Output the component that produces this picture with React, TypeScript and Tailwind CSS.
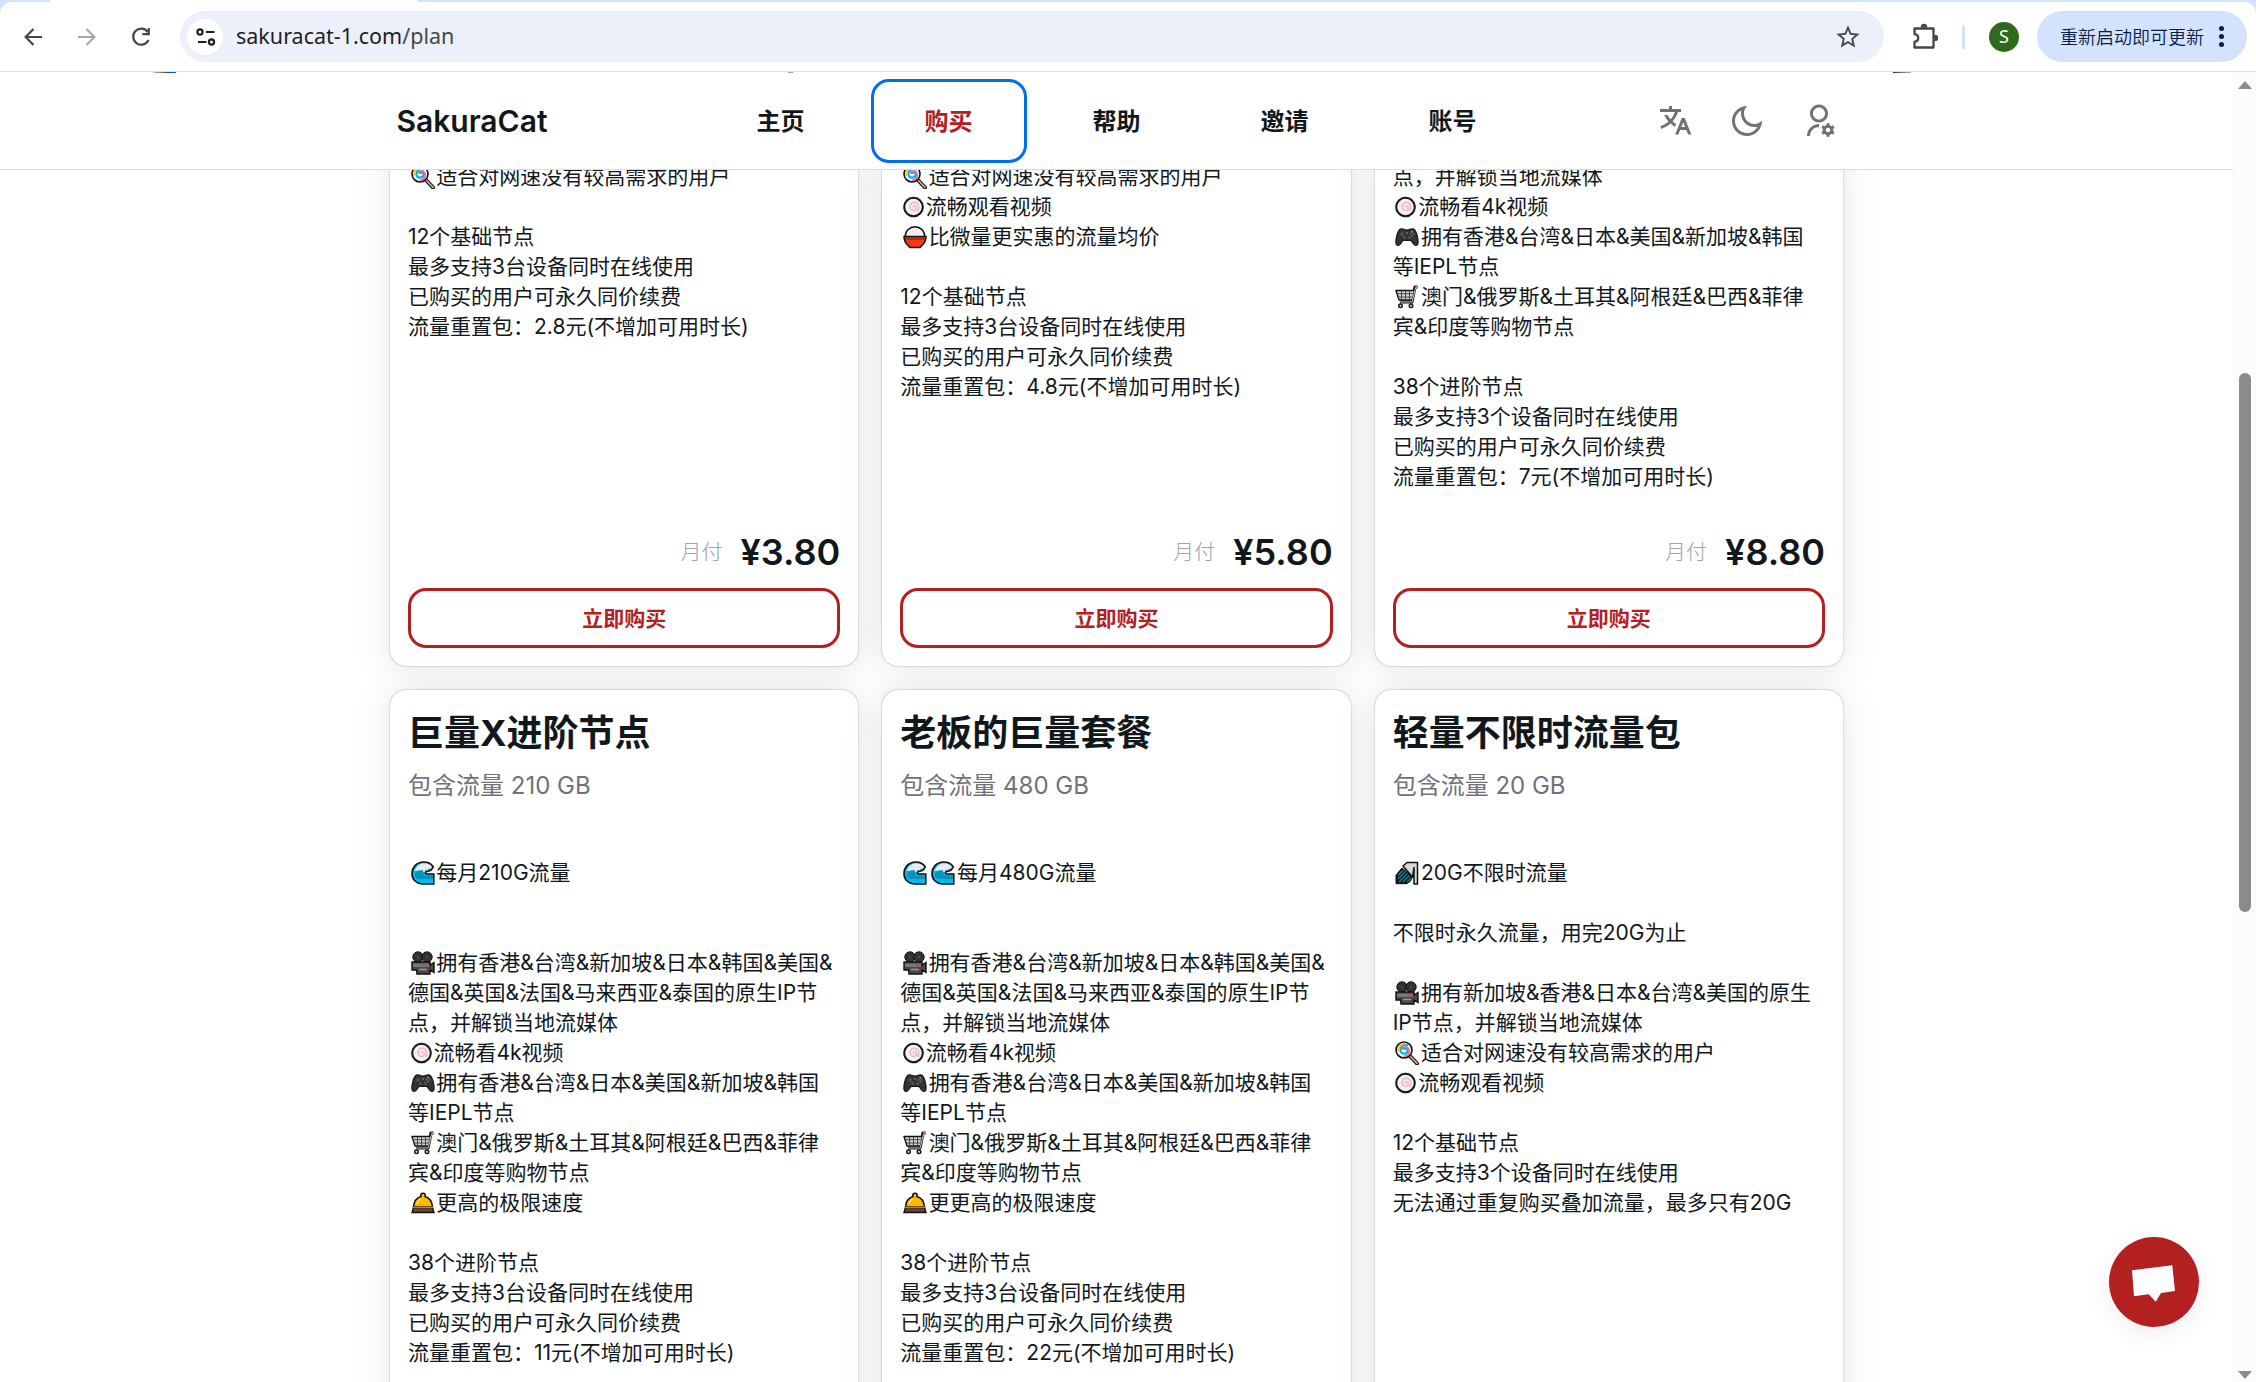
import type { ReactNode } from "react";
import { RiMoonLine, RiTranslate2, RiUserSettingsLine } from "react-icons/ri";

type EmojiName = "wave" | "camera" | "naruto" | "game" | "cart" | "bell" | "candy" | "rice" | "shower";

const drawings: Record<EmojiName, ReactNode> = {
  wave: (
    <>
      <path d="M22.8 13v10H11C5 22.500 1 18.500 1 12.500C1 6 6 1 12.500 1c4.500 0 8 1.800 9.800 5l-2.300 3.200-5 1.600c-1 1.300-.6 2.200.8 2.200z" fill="#00b7e8" stroke="#111" strokeWidth="1.600" />
      <path d="M3.500 10C5 5 9 2.200 13 2.200c3.500 0 6.500 1.400 8 4l-2 2-1-1.200-1.300 2.500-2-1-1 2.700C10 9 6 10 3.500 10z" fill="#ececec" />
      <path d="M4 14c0-2 1.500-4 4-4.500l4-.5-.5 2 2 3.500L22 15v3H8c-2-.5-4-2-4-4z" fill="#0a93b8" />
      <path d="M4 18c3 2 5-1 8 1s6-1 10 .5V22H10z" fill="#00bcf2" />
    </>
  ),
  camera: (
    <>
      <circle cx="7" cy="6" r="5.200" fill="#333" stroke="#111" />
      <circle cx="16" cy="6" r="5.200" fill="#333" stroke="#111" />
      <path d="M1 11h18v3l4-2.500v10L19 19v4H6l-.5-4H1z" fill="#494949" stroke="#111" strokeWidth="1.400" />
      <path d="M2 12.500h16v3.500H2z" fill="#777" />
      <path d="M14 12.500h2v3h-2z" fill="#e43b2a" />
      <path d="M8 18.500h8" stroke="#999" strokeWidth="1.500" />
      <circle cx="7" cy="6" r="1" fill="#555" />
      <circle cx="16" cy="6" r="1" fill="#555" />
    </>
  ),
  naruto: (
    <>
      <circle cx="10.500" cy="12" r="9.300" fill="#f1f1f1" stroke="#111" strokeWidth="2" />
      <circle cx="10.500" cy="12" r="9.900" fill="none" stroke="#555" strokeWidth="0.900" strokeDasharray="1.500 2" />
      <path d="M10.500 12.500c-1-1.500 2-2.500 2.700-.2.600 2.600-3 4.200-5 2.200-2.400-2.600-.6-7.500 3.400-7.200 4.200.5 5.500 5.700 2.800 8.700" fill="none" stroke="#f7b3bd" strokeWidth="1.400" />
    </>
  ),
  game: (
    <>
      <path d="M5.500 4C8 3 9 5 12 5s4-2 6.500-1C21.500 5.500 23.500 14 23 18.500c-.4 2.500-3 2.500-4.500.5L16 15.500H8L5.500 19C4 21 1.400 21 1 18.500.500 14 2.500 5.500 5.500 4z" fill="#333" stroke="#151515" strokeWidth="1.200" />
      <path d="M5 9h4M7 7v4" stroke="#555" strokeWidth="1.400" />
      <circle cx="9.500" cy="12.500" r="1.400" fill="#555" />
      <circle cx="14.500" cy="12.500" r="1.400" fill="#555" />
      <circle cx="17.200" cy="6.800" r=".9" fill="#d8b021" />
      <circle cx="19" cy="8.700" r=".9" fill="#c23b2a" />
      <circle cx="17.200" cy="10.500" r=".9" fill="#3a9b4b" />
      <circle cx="15.400" cy="8.700" r=".9" fill="#3a78c2" />
      <circle cx="12" cy="8" r=".8" fill="#999" />
    </>
  ),
  cart: (
    <>
      <path d="M22.500 2h-2.500L17 17H5" fill="none" stroke="#111" strokeWidth="3.200" strokeLinejoin="round" />
      <path d="M1 5.500h18.500L17.500 15H4z" fill="#d4d4d4" stroke="#111" strokeWidth="1.400" strokeLinejoin="round" />
      <path d="M2.500 8.700h16M3.500 12h14M6.500 6v8.500M10.500 6v8.500M14.500 6v8.500" stroke="#444" strokeWidth="1" />
      <path d="M20.500 3L17.200 17H4.500" fill="none" stroke="#ccc" strokeWidth="1" />
      <circle cx="5.500" cy="20.800" r="1.800" fill="#ddd" stroke="#111" strokeWidth="1.400" />
      <circle cx="16" cy="20.800" r="1.800" fill="#ddd" stroke="#111" strokeWidth="1.400" />
      <path d="M20.300 2h2.700" stroke="#f06a62" strokeWidth="2.400" />
    </>
  ),
  bell: (
    <>
      <path d="M12 2.200c2 0 2.800 1.500 2 3.300 4.300 1.200 7 5 7.500 10.500h-19C3 10.500 5.700 6.700 10 5.500c-.8-1.800 0-3.300 2-3.300z" fill="#ffb900" stroke="#111" strokeWidth="1.500" />
      <path d="M6 13c.5-2.500 1.800-4 3.500-5" fill="none" stroke="#ffe08a" strokeWidth="1.300" />
      <path d="M2.500 16.500h19L23 21.500H1z" fill="#6d4534" stroke="#111" strokeWidth="1.400" />
      <path d="M2 16.300h20" stroke="#e08a00" strokeWidth="1.300" />
    </>
  ),
  candy: (
    <>
      <path d="M14 14l8 8.500" stroke="#111" strokeWidth="4" strokeLinecap="round" />
      <path d="M14 14l8 8.300" stroke="#d9a58a" strokeWidth="1.800" strokeLinecap="round" />
      <circle cx="9" cy="9" r="8" fill="#fff" stroke="#111" strokeWidth="1.600" />
      <path d="M9 9c0-2.500 4-1.700 3.600 1-.5 3.500-6.200 3.600-7 0C4.800 5.500 9 2.500 13 4.700" fill="none" stroke="#00b7e8" strokeWidth="2.200" />
      <path d="M7.300 8.500c.6-2.800 5-3.300 6.600-.4 1.600 3.500-1 7.200-5 7.200" fill="none" stroke="#ff5a9e" strokeWidth="1.700" />
      <path d="M3.500 11C2 6.500 6 2 10 2.700" fill="none" stroke="#ffc02e" strokeWidth="1.800" />
    </>
  ),
  rice: (
    <>
      <path d="M2.300 12.500C2 5.500 7 1.700 12 1.700S22 5.500 21.700 12.500z" fill="#f1f1f1" stroke="#111" strokeWidth="1.600" />
      <path d="M1 11.500h22c0 4-1.500 7-4.500 9.500L17 22.600H7L5.500 21C2.500 18.500 1 15.500 1 11.500z" fill="#f03a17" stroke="#111" strokeWidth="1.500" />
      <path d="M2 13.900h20" stroke="#b01a0c" strokeWidth="1.500" />
      <path d="M9 6h1M13 5h1M15 8h1M11 9h1" stroke="#ccc" />
    </>
  ),
  shower: (
    <>
      <path d="M8 5l4-3.500h10.500V23H19V6.500l-1.500 9.500z" fill="#d9d9d9" stroke="#111" strokeWidth="1.500" strokeLinejoin="round" />
      <path d="M7 7l10.500 9-2 4-3.500 2.700H1V14z" fill="#101b22" stroke="#111" />
      <path d="M3 14.500l5-5M3 18l7.500-7.500M4 21l8.500-8.500M8 21l6.500-6.500M12 21l4-4" stroke="#17839f" strokeWidth="1.200" />
    </>
  ),
};

function Emoji({ name }: { name: EmojiName }) {
  return (
    <svg
      viewBox={name === "naruto" ? "0 0 21 24" : "0 0 24 24"}
      className={name === "naruto" ? "ml-[2.500px] mr-[2px] h-6 w-[21px] shrink-0" : "ml-[2.500px] mr-[1.800px] h-6 w-6 shrink-0"}
    >
      {drawings[name]}
    </svg>
  );
}

type Line = string | [EmojiName[], string];

const advanced: Line[] = [
  "点，并解锁当地流媒体",
  [["naruto"], "流畅看4k视频"],
  [["game"], "拥有香港&台湾&日本&美国&新加坡&韩国"],
  "等IEPL节点",
  [["cart"], "澳门&俄罗斯&土耳其&阿根廷&巴西&菲律"],
  "宾&印度等购物节点",
];

const native: Line[] = [
  [["camera"], "拥有香港&台湾&新加坡&日本&韩国&美国&"],
  "德国&英国&法国&马来西亚&泰国的原生IP节",
];

const upperPlans: { lines: Line[]; price: string }[] = [
  {
    price: "¥3.80",
    lines: [
      [["candy"], "适合对网速没有较高需求的用户"],
      "",
      "12个基础节点",
      "最多支持3台设备同时在线使用",
      "已购买的用户可永久同价续费",
      "流量重置包：2.8元(不增加可用时长)",
    ],
  },
  {
    price: "¥5.80",
    lines: [
      [["candy"], "适合对网速没有较高需求的用户"],
      [["naruto"], "流畅观看视频"],
      [["rice"], "比微量更实惠的流量均价"],
      "",
      "12个基础节点",
      "最多支持3台设备同时在线使用",
      "已购买的用户可永久同价续费",
      "流量重置包：4.8元(不增加可用时长)",
    ],
  },
  {
    price: "¥8.80",
    lines: [
      ...advanced,
      "",
      "38个进阶节点",
      "最多支持3个设备同时在线使用",
      "已购买的用户可永久同价续费",
      "流量重置包：7元(不增加可用时长)",
    ],
  },
];

const lowerPlans: { title: string; traffic: string; lines: Line[] }[] = [
  {
    title: "巨量X进阶节点",
    traffic: "包含流量 210 GB",
    lines: [
      [["wave"], "每月210G流量"],
      "",
      "",
      ...native,
      ...advanced,
      [["bell"], "更高的极限速度"],
      "",
      "38个进阶节点",
      "最多支持3台设备同时在线使用",
      "已购买的用户可永久同价续费",
      "流量重置包：11元(不增加可用时长)",
    ],
  },
  {
    title: "老板的巨量套餐",
    traffic: "包含流量 480 GB",
    lines: [
      [["wave", "wave"], "每月480G流量"],
      "",
      "",
      ...native,
      ...advanced,
      [["bell"], "更更高的极限速度"],
      "",
      "38个进阶节点",
      "最多支持3台设备同时在线使用",
      "已购买的用户可永久同价续费",
      "流量重置包：22元(不增加可用时长)",
    ],
  },
  {
    title: "轻量不限时流量包",
    traffic: "包含流量 20 GB",
    lines: [
      [["shower"], "20G不限时流量"],
      "",
      "不限时永久流量，用完20G为止",
      "",
      [["camera"], "拥有新加坡&香港&日本&台湾&美国的原生"],
      "IP节点，并解锁当地流媒体",
      [["candy"], "适合对网速没有较高需求的用户"],
      [["naruto"], "流畅观看视频"],
      "",
      "12个基础节点",
      "最多支持3个设备同时在线使用",
      "无法通过重复购买叠加流量，最多只有20G",
    ],
  },
];

const cardClass =
  "flex flex-col rounded-[16px] bg-white p-[18px] shadow-[0_0_22px_rgba(0,0,0,0.03),0_3px_45px_rgba(0,0,0,0.08),0_0_1.500px_rgba(0,0,0,0.45)]";

function Lines({ lines }: { lines: Line[] }) {
  return (
    <div className="text-[21px] font-[399] leading-[30px] whitespace-nowrap">
      {lines.map((line, i) => (
        <div key={i} className="flex h-[30px] items-center">
          {typeof line !== "string" && line[0].map((name, k) => <Emoji key={k} name={name} />)}
          <span>{typeof line === "string" ? line : line[1]}</span>
        </div>
      ))}
    </div>
  );
}

function BrowserBar() {
  return (
    <div className="h-[72px] shrink-0 border-b border-[#dfe1e0] bg-[#d3e3fd]">
      <div className="h-[2px] pl-[50px]">
        <div className="h-[2px] w-[368px] bg-white" />
      </div>
      <div className="flex h-[69px] items-center rounded-t-[12px] bg-white pr-[9px] font-['Noto_Sans','Noto_Sans_CJK_SC',sans-serif]">
        <svg viewBox="0 0 18 18" className="ml-[24px] h-[18px] w-[18px]" fill="none" stroke="#474747" strokeWidth="2.200">
          <path d="M9.500 1L1.600 9l7.900 8M1.600 9H18" />
        </svg>
        <svg viewBox="0 0 18 18" className="ml-[36px] h-[18px] w-[18px]" fill="none" stroke="#a8a8a8" strokeWidth="2.200">
          <path d="M8.500 1l7.900 8-7.900 8M16.400 9H0" />
        </svg>
        <svg viewBox="0 0 20 20" className="ml-[35px] h-5 w-5" fill="none" stroke="#474747" strokeWidth="2.200">
          <path d="M16.700 5A8 8 0 1 0 17.500 13M17.800 1v6.200h-6.500" />
        </svg>
        <div className="ml-[29px] flex h-[51px] w-[1704px] items-center rounded-full bg-[#ebf0fa] px-[7px]">
          <div className="flex h-[36px] w-[36px] items-center justify-center rounded-full bg-white">
            <svg viewBox="0 0 20 18" className="ml-[2px] h-[18px] w-5" fill="none" stroke="#1f1f1f" strokeWidth="2.200">
              <circle cx="4" cy="4" r="2.600" />
              <path d="M10 4h8.500M2 14h8.500" />
              <circle cx="15.500" cy="14" r="2.600" />
            </svg>
          </div>
          <span className="ml-[13px] text-[21.500px] text-[#1f1f1f]">
            sakuracat-1.com<span className="text-[#474747]">/plan</span>
          </span>
          <svg viewBox="0 0 24 24" className="mr-[15px] ml-auto h-[28px] w-[28px]" fill="#474747">
            <path d="M22 9.240l-7.190-.62L12 2 9.190 8.630 2 9.240l5.460 4.730L5.820 21 12 17.270 18.180 21l-1.630-7.030L22 9.240zM12 15.400l-3.760 2.270 1-4.280-3.320-2.880 4.380-.38L12 6.100l1.710 4.040 4.380.38-3.320 2.880 1 4.280L12 15.400z" />
          </svg>
        </div>
        <svg viewBox="0 0 26 26" className="mb-[2px] ml-[28px] h-[26px] w-[26px]" fill="none" stroke="#474747" strokeWidth="2.300" strokeLinejoin="round">
          <path d="M2.500 5.500h19v19h-19v-5.700c5-.6 5-7 0-7.600z" />
          <path d="M9.500 4a2.500 2.500 0 0 1 5 0zM23 12.500a2 2 0 0 1 0 5z" fill="#474747" strokeWidth="1.500" />
        </svg>
        <div className="ml-[24px] h-6 w-[3px] rounded-full bg-[#d3e3fd]" />
        <div className="ml-[24px] flex h-[30px] w-[30px] items-center justify-center rounded-full bg-[#2f6a1c] text-[18px] text-white">S</div>
        <div className="ml-auto flex h-[51px] w-[210px] items-center rounded-full bg-[#d3e3fd] pl-[23px] text-[18px] text-[#041e49]">
          <span className="mt-[1px] font-[350] whitespace-nowrap">重新启动即可更新</span>
          <div className="ml-[15px] flex flex-col gap-[3px]">
            <i className="h-[5px] w-[5px] rounded-full bg-[#041e49]" />
            <i className="h-[5px] w-[5px] rounded-full bg-[#041e49]" />
            <i className="h-[5px] w-[5px] rounded-full bg-[#041e49]" />
          </div>
        </div>
      </div>
    </div>
  );
}

const navItems = ["主页", "购买", "帮助", "邀请", "账号"];

function Header() {
  return (
    <div className="flex h-[98px] shrink-0 flex-col border-b border-[#dcdcdc]">
      <div className="flex h-px shrink-0">
        <div className="ml-[153px] h-px w-[17px] bg-gradient-to-r from-[#c8c8c8] to-[#333333]" />
        <div className="h-px w-[6px] bg-[#0b5bd3]" />
        <div className="ml-[612px] h-px w-[5px] bg-[#a0a0a0]" />
        <div className="ml-[1100px] h-px w-[18px] bg-gradient-to-r from-[#2c3a36] to-[#b0b0b0]" />
      </div>
      <div className="flex h-[96px] items-center pl-[396.500px]">
        <div className="w-[300px] text-[30px] leading-none font-[640]">SakuraCat</div>
        <nav className="flex text-[24px] font-bold">
          {navItems.map((item) => (
            <div
              key={item}
              className={
                item === "购买"
                  ? "mx-[6px] flex h-[84px] w-[156px] items-center justify-center rounded-[18px] border-[3px] border-[#006fee] pt-[1px] text-[#b32020]"
                  : "mx-[6px] flex h-[84px] w-[156px] items-center justify-center pt-[1px]"
              }
            >
              {item}
            </div>
          ))}
        </nav>
        <div className="ml-[120.500px] flex items-center gap-[36px] text-[36px] text-[#71717a]">
          <RiTranslate2 />
          <RiMoonLine />
          <RiUserSettingsLine />
        </div>
      </div>
    </div>
  );
}

function Scrollbar() {
  return (
    <div className="flex w-[23px] shrink-0 flex-col items-center bg-[#fcfcfc]">
      <div className="mt-[9px] border-x-[7.500px] border-b-[8px] border-x-transparent border-b-[#8b8b8b]" />
      <div className="mt-[284px] h-[539px] w-[12px] rounded-full bg-[#8b8b8b]" />
      <div className="mt-auto mb-[3px] border-x-[7.500px] border-t-[8px] border-x-transparent border-t-[#8b8b8b]" />
    </div>
  );
}

export default function App() {
  return (
    <div className="relative flex h-[1382px] w-[2256px] flex-col overflow-hidden bg-white font-['Inter','Noto_Sans_CJK_SC',sans-serif] text-[#11181c]">
      <BrowserBar />
      <div className="flex min-h-0 flex-1">
        <div className="flex min-w-0 flex-1 flex-col">
          <Header />
          <main className="min-h-0 flex-1 overflow-hidden">
            <div className="-mt-[26px] ml-[390px] grid w-[1453px] grid-cols-3 gap-6">
              {upperPlans.map((plan) => (
                <section key={plan.price} className={cardClass + " h-[522px]"}>
                  <Lines lines={plan.lines} />
                  <div className="mt-auto flex items-center justify-end gap-[18px]">
                    <span className="text-[21px] font-light text-[#a1a1aa]">月付</span>
                    <span className="text-[36px] leading-[54px] font-semibold">{plan.price}</span>
                  </div>
                  <button className="mt-[9px] h-[60px] rounded-[18px] border-[3px] border-[#b32020] pt-[1px] text-[21px] font-bold text-[#b32020]">
                    立即购买
                  </button>
                </section>
              ))}
              {lowerPlans.map((plan) => (
                <section key={plan.title} className={cardClass + " h-[800px]"}>
                  <h2 className="text-[36px] leading-[51px] font-bold">{plan.title}</h2>
                  <p className="mt-[9px] mb-[54px] text-[24px] leading-[36px] font-[399] text-[#71717a]">{plan.traffic}</p>
                  <Lines lines={plan.lines} />
                </section>
              ))}
            </div>
          </main>
        </div>
        <Scrollbar />
      </div>
      <button className="absolute top-[1237px] left-[2109px] h-[90px] w-[90px] rounded-full bg-[#b32020] shadow-[0_6px_24px_rgba(0,0,0,0.08)]">
        <svg viewBox="0 0 90 90" className="h-[90px] w-[90px]">
          <path d="M23 33.300L63.300 28.300 66 54 52 56 46.700 64.700 39.700 57.300 25 59.300z" fill="#fff" />
        </svg>
      </button>
    </div>
  );
}
